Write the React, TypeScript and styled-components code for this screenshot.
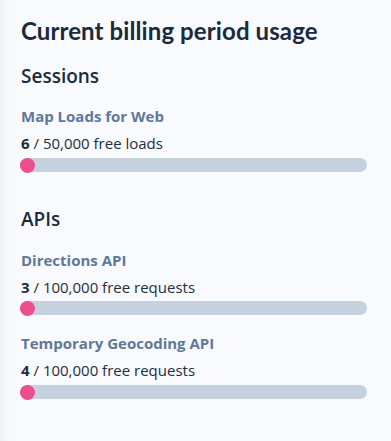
import React from "react";
import styled, { createGlobalStyle } from "styled-components";

const Global = createGlobalStyle`
  html, body { margin: 0; padding: 0; background: #f9fafd; }
  body { font-family: "Open Sans", "Liberation Sans", sans-serif; }
`;

const Panel = styled.div`
  width: 391px;
  height: 441px;
  box-sizing: border-box;
  padding: 16px 24px 0 20px;
  background: linear-gradient(to right, #eef0f4 0px, #f7f8fb 8px, #f9fafd 14px);
`;

const Title = styled.h1`
  margin: 0 0 0 1px;
  font-family: "Lato", "Open Sans", sans-serif;
  font-weight: 700;
  font-size: 24px;
  line-height: 30px;
  color: #1b2a3e;
  letter-spacing: 0.1px;
`;

const Section = styled.section<{ $top: number }>`
  margin-top: ${(p) => p.$top}px;
`;

const SectionTitle = styled.h2`
  margin: 0 0 0 1px;
  font-weight: 600;
  font-size: 19px;
  line-height: 24px;
  color: #1b2a3e;
`;

const Item = styled.div<{ $top: number }>`
  margin-top: ${(p) => p.$top}px;
`;

const Label = styled.div`
  margin-left: 1px;
  font-weight: 700;
  font-size: 15px;
  line-height: 20px;
  color: #5f7899;
`;

const Count = styled.div`
  margin: 7px 0 0 1px;
  font-size: 15px;
  line-height: 20px;
  color: #1f2d40;
  b { font-weight: 700; }
`;

const Track = styled.div`
  margin-top: 5px;
  height: 14px;
  border-radius: 7px;
  background: #c6d1e0;
`;

const Fill = styled.div`
  height: 15px;
  margin-top: -0.5px;
  min-width: 15px;
  border-radius: 8px;
  background: #ee4e8b;
`;

type Usage = { label: string; used: number; limit: string; unit: string; total: number };

const Meter = ({ u, top }: { u: Usage; top: number }) => (
  <Item $top={top}>
    <Label>{u.label}</Label>
    <Count>
      <b>{u.used}</b> / {u.limit} free {u.unit}
    </Count>
    <Track>
      <Fill style={{ width: `${(u.used / u.total) * 100}%` }} />
    </Track>
  </Item>
);

export default function App() {
  return (
    <>
      <Global />
      <Panel>
        <Title>Current billing period usage</Title>
        <Section $top={18}>
          <SectionTitle>Sessions</SectionTitle>
          <Meter top={18} u={{ label: "Map Loads for Web", used: 6, limit: "50,000", unit: "loads", total: 50000 }} />
        </Section>
        <Section $top={35}>
          <SectionTitle>APIs</SectionTitle>
          <Meter top={19} u={{ label: "Directions API", used: 3, limit: "100,000", unit: "requests", total: 100000 }} />
          <Meter top={18} u={{ label: "Temporary Geocoding API", used: 4, limit: "100,000", unit: "requests", total: 100000 }} />
        </Section>
      </Panel>
    </>
  );
}
